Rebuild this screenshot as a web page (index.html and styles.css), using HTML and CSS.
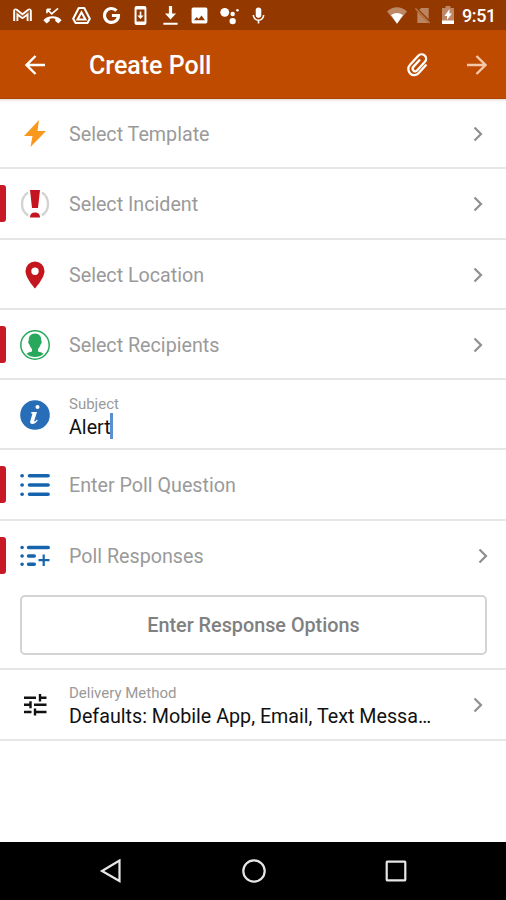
FILE: index.html
```html
<!DOCTYPE html>
<html lang="en">
<head>
    <meta charset="UTF-8">
    <meta name="viewport" content="width=device-width, initial-scale=1.0">
    <title>Create Poll</title>
    <link rel="stylesheet" href="styles.css">
</head>
<body>
    <div class="screen">
        <div class="status-bar">
            <div class="notifications">
                <svg viewBox="0 0 24 24"><path d="M3.500 19V6.500L12 13l8.500-6.500V19" fill="none" stroke="#fff" stroke-width="6.500" stroke-linejoin="round"/><path d="M3.500 20V6.500L12 13l8.500-6.500V20" fill="none" stroke="#a85a2c" stroke-width="2"/></svg>
                <svg viewBox="0 0 24 24"><path d="M5 4v5M5 4h5M5 4l6 6 8-7" fill="none" stroke="#fff" stroke-width="2"/><path d="M12 13C7 13 3 15 .5 18l4 4 4-3v-3q3.500-1 7 0v3l4 3 4-4C21 15 17 13 12 13z"/></svg>
                <svg viewBox="0 0 24 24"><path d="M8.500 2.500h7L22.500 16l-3 5.500h-15L1.500 16z" fill="none" stroke="#fff" stroke-width="2.600" stroke-linejoin="round"/><path d="M12 8l5 9H7z" fill="none" stroke="#fff" stroke-width="2.600"/></svg>
                <svg viewBox="0 0 24 24"><path d="M18.300 5.800A8.800 8.800 0 1 0 20.800 12H12.500" fill="none" stroke="#fff" stroke-width="4"/></svg>
                <svg viewBox="0 0 24 24"><path d="M7 0h10a2.500 2.500 0 0 1 2.500 2.500v19A2.500 2.500 0 0 1 17 24H7a2.500 2.500 0 0 1-2.500-2.500v-19A2.500 2.500 0 0 1 7 0zM7 4.500v15h10v-15zM11 7h2v5h3l-4 4.500L8 12h3z" fill-rule="evenodd"/></svg>
                <svg viewBox="0 0 24 24"><path d="M10 0h4v9.500h5L12 17 5 9.500h5zM3 21h18v2.600H3z"/></svg>
                <svg viewBox="0 0 24 24"><path d="M4 2h16a2 2 0 0 1 2 2v16a2 2 0 0 1-2 2H4a2 2 0 0 1-2-2V4a2 2 0 0 1 2-2zm1 16h14l-4.500-6-3.500 4.500L8.500 14z" fill-rule="evenodd"/></svg>
                <svg viewBox="0 0 24 24"><circle cx="6" cy="8" r="5.600"/><circle cx="16" cy="10" r="2.800"/><circle cx="22" cy="5.500" r="1.600"/><circle cx="16" cy="19" r="4"/></svg>
                <svg viewBox="0 0 24 24"><rect x="8.500" y="2" width="7" height="13" rx="3.500"/><path d="M5.500 11.500a6.500 6.500 0 0 0 13 0M12 18v4" fill="none" stroke="#fff" stroke-width="2"/></svg>
            </div>
            <div class="system">
                <svg class="wifi" viewBox="0 0 22 18"><path d="M0 4.500Q11-4.500 22 4.500L11 18z" opacity=".4"/><path d="M4.500 8.500Q11 4 17.500 8.500L11 18z"/></svg>
                <svg class="no-sim" viewBox="0 0 16 18"><path d="M6 1h8v16H2V5z" opacity=".38"/><path d="M0 1l16 16" stroke="#933900" stroke-width="3"/><path d="M0 1.500l15 15.500" stroke="#b87d55" stroke-width="1.500"/></svg>
                <svg class="battery" viewBox="0 0 12 18"><path d="M3.500 0h5v2H12v16H0V2h3.500z" opacity=".4"/><path d="M0 14.500h12V18H0zM7.500 3L2.500 10H5v4l5-6.500H7.500z"/></svg>
                <span class="clock">9:51</span>
            </div>
        </div>

        <div class="app-bar">
            <svg class="back" viewBox="0 0 20 20"><path d="M20 10H2M10.500 1L1.500 10l9 9"/></svg>
            <h1>Create Poll</h1>
            <svg class="clip" viewBox="0 0 24 24"><g transform="rotate(42 12 12)"><path d="M18 6v11.500a6 6 0 0 1-12 0V5a4.500 4.500 0 0 1 9 0v11.500a2.600 2.600 0 0 1-5.200 0V6.500"/></g></svg>
            <svg class="next" viewBox="0 0 20 20"><path d="M0 10h18M9.500 1l9 9-9 9"/></svg>
        </div>

        <div class="form">
            <div class="row">
                <div class="icon"><svg viewBox="0 0 30 30"><path d="M19 1L4 17h8.500L10.500 28 26 12h-8.500z" fill="#f9981d"/></svg></div>
                <div class="text placeholder">Select Template</div>
                <svg class="chevron" viewBox="0 0 10 16"><path d="M1.500 1.500L8 8l-6.500 6.500"/></svg>
            </div>
            <div class="row required">
                <div class="icon"><svg viewBox="0 0 30 30"><path d="M8 3.500a14 14 0 0 0 0 23M22 3.500a14 14 0 0 1 0 23" fill="none" stroke="#d3d3d3" stroke-width="2.400"/><path d="M10 1h10l-2 18h-6zM10 28.500q0-5 5-5t5 5z" fill="#c4141f"/></svg></div>
                <div class="text placeholder">Select Incident</div>
                <svg class="chevron" viewBox="0 0 10 16"><path d="M1.500 1.500L8 8l-6.500 6.500"/></svg>
            </div>
            <div class="row">
                <div class="icon"><svg viewBox="0 0 30 30"><path d="M15 1.500a9.500 9.500 0 0 0-9.500 9.500C5.500 18 15 28.500 15 28.500S24.500 18 24.500 11A9.500 9.500 0 0 0 15 1.500zm0 6a3.700 3.700 0 1 1 0 7.400 3.700 3.700 0 0 1 0-7.400z" fill="#c4161f" fill-rule="evenodd"/></svg></div>
                <div class="text placeholder">Select Location</div>
                <svg class="chevron" viewBox="0 0 10 16"><path d="M1.500 1.500L8 8l-6.500 6.500"/></svg>
            </div>
            <div class="row required">
                <div class="icon"><svg viewBox="0 0 30 30"><circle cx="15" cy="15" r="14.200" fill="none" stroke="#27a85d" stroke-width="1.500"/><path d="M15 3.500c-4.300 0-6.500 3-6.200 7-1 .3-.5 3.500.7 4 .5 2 1.300 3.300 2.500 4.500v2.500c-2 .8-4 .7-5.500 2.300Q10 27 15 27t8.500-3.200c-1.500-1.600-3.500-1.500-5.500-2.300V19c1.200-1.200 2-2.500 2.500-4.500 1.200-.5 1.700-3.700.7-4 .3-4-1.900-7-6.200-7z" fill="#27a85d"/></svg></div>
                <div class="text placeholder">Select Recipients</div>
                <svg class="chevron" viewBox="0 0 10 16"><path d="M1.500 1.500L8 8l-6.500 6.500"/></svg>
            </div>
            <div class="row subject">
                <div class="icon"><svg viewBox="0 0 30 30"><circle cx="15" cy="15" r="14.800" fill="#276db8"/><circle cx="17.500" cy="7" r="2" fill="#fff"/><path d="M11.500 12h5.500l-3 9.500q1.500 0 3-2l.8.800q-2.300 3.700-5.300 3.700-3 0-2.200-3l2.200-7.500h-1.500z" fill="#fff"/></svg></div>
                <div class="text filled">
                    <span class="label">Subject</span>
                    <span class="value">Alert<i class="caret"></i></span>
                </div>
            </div>
            <div class="row required">
                <div class="icon"><svg viewBox="0 0 30 30"><path d="M9.500 5.700h18.600M9.500 15h18.600M9.500 24.200h18.600M2 5.700h.2M2 15h.2M2 24.200h.2" stroke="#1764ae" stroke-width="3.600" stroke-linecap="round"/></svg></div>
                <div class="text placeholder">Enter Poll Question</div>
            </div>
            <div class="row required responses">
                <div class="icon"><svg viewBox="0 0 30 30"><path d="M8.500 6.500h19.800M8.500 15h5.800M8.500 23.300h5.800M2 6.500h.2M2 15h.2M2 23.300h.2" stroke="#1764ae" stroke-width="3.400" stroke-linecap="round"/><path d="M23.700 13.500v11.500M18.500 19.200h11" stroke="#1764ae" stroke-width="2.200"/></svg></div>
                <div class="text placeholder">Poll Responses</div>
                <svg class="chevron" viewBox="0 0 10 16"><path d="M1.500 1.500L8 8l-6.500 6.500"/></svg>
            </div>
            <div class="options">
                <button type="button">Enter Response Options</button>
            </div>
            <div class="row delivery">
                <div class="icon"><svg viewBox="0 0 30 30"><path d="M4 7.700h12M19 7.700h7.500M20 4v7.500M4 14.800h7M10.500 11.300v7M14 14.800h12.500M4 22h7.500M15 18.500v7M15 22h11.500" fill="none" stroke="#111" stroke-width="2.400"/></svg></div>
                <div class="text filled">
                    <span class="label">Delivery Method</span>
                    <span class="value">Defaults: Mobile App, Email, Text Messa…</span>
                </div>
                <svg class="chevron" viewBox="0 0 10 16"><path d="M1.500 1.500L8 8l-6.500 6.500"/></svg>
            </div>
        </div>

        <div class="nav-bar">
            <svg viewBox="0 0 24 24"><path d="M20.500 1.500v20.500L3 12z"/></svg>
            <svg viewBox="0 0 24 24"><circle cx="12" cy="12" r="10.700"/></svg>
            <svg viewBox="0 0 24 24"><rect x="2.700" y="2.700" width="18.600" height="18.600" rx=".5"/></svg>
        </div>
    </div>
</body>
</html>
```

FILE: styles.css
```css
* {
    box-sizing: border-box;
}

body {
    margin: 0;
    font-family: Roboto, "Liberation Sans", sans-serif;
    background-color: #fff;
}

svg {
    display: block;
    flex: none;
}

.screen {
    display: flex;
    flex-direction: column;
    width: 506px;
    height: 900px;
}

/* status bar */
.status-bar {
    display: flex;
    justify-content: space-between;
    align-items: center;
    height: 30px;
    padding: 0 10px 0 8px;
    background-color: #933900;
}

.status-bar svg {
    fill: #fff;
}

.notifications {
    display: flex;
}

.notifications svg {
    width: 19px;
    height: 19px;
    margin: 0 5.250px;
}

.system {
    display: flex;
    align-items: center;
}

.wifi {
    width: 20px;
    height: 17px;
    margin-right: 8px;
}

.no-sim {
    width: 16px;
    height: 17px;
    margin-right: 11px;
}

.battery {
    width: 12px;
    height: 18px;
    margin-right: 8px;
}

.clock {
    width: 34px;
    font-size: 18px;
    letter-spacing: -0.400px;
    font-weight: 500;
    line-height: 20px;
    padding-top: 1px;
    color: #fff;
    white-space: nowrap;
}

/* title bar */
.app-bar {
    display: flex;
    align-items: center;
    height: 69px;
    padding: 1px 19px 0 25px;
    background-color: #bf4b00;
    border-bottom: 1px solid #b04300;
}

.app-bar svg {
    width: 20px;
    height: 20px;
    fill: none;
    stroke: #fff;
    stroke-width: 2.400;
}

.app-bar h1 {
    flex: 1;
    margin: 0 0 0 44px;
    padding-top: 2px;
    font-size: 25px;
    font-weight: 500;
    line-height: 30px;
    color: #fff;
}

.app-bar .clip {
    width: 24px;
    height: 24px;
    margin-right: 37px;
    stroke-width: 2.300;
}

.app-bar .next {
    stroke: #f5c8aa;
}

/* form rows */
.form {
    flex: 1;
    background: linear-gradient(#e6dcd6, #fff 3px);
}

.row {
    position: relative;
    display: flex;
    align-items: center;
    height: 70.250px;
    padding: 2px 23px 0 20px;
    border-bottom: 2px solid #e6e6e6;
}

.required::before {
    content: "";
    position: absolute;
    left: 0;
    top: 16px;
    width: 6px;
    height: 37px;
    border-radius: 0 3px 3px 0;
    background-color: #c81a26;
}

.icon {
    width: 30px;
    margin-right: 19px;
}

.icon svg {
    width: 30px;
    height: 30px;
}

.text {
    flex: 1;
    min-width: 0;
    font-size: 19.700px;
    line-height: 24px;
    white-space: nowrap;
}

.placeholder {
    padding-top: 2px;
    color: #9a9a9a;
}

.label {
    display: block;
    font-size: 15px;
    line-height: 20px;
    color: #999;
}

.value {
    display: flex;
    line-height: 27px;
    color: #111;
}

.subject .filled {
    padding-top: 4px;
}

.delivery .filled {
    padding-top: 2px;
}

.caret {
    width: 3px;
    height: 26px;
    margin: -1px 0 0 -1px;
    background-color: #5b8fd0;
}

.chevron {
    width: 10px;
    height: 16px;
    fill: none;
    stroke: #8f8f8f;
    stroke-width: 2.200;
}

.responses {
    border-bottom: none;
    padding-top: 0;
    padding-right: 18px;
}

.options {
    height: 79.500px;
    padding: 4.500px 19px 0 20px;
    border-bottom: 2px solid #e6e6e6;
}

.options button {
    display: block;
    width: 100%;
    height: 60px;
    border: 2px solid #d3d3d3;
    border-radius: 5px;
    background-color: #fff;
    font-family: inherit;
    font-size: 19.800px;
    font-weight: 500;
    color: #808080;
}

/* system navigation */
.nav-bar {
    display: flex;
    justify-content: space-between;
    align-items: center;
    height: 58px;
    padding: 0 98px 0 99px;
    background-color: #000;
}

.nav-bar svg {
    width: 24px;
    height: 24px;
    fill: none;
    stroke: #e6e6e6;
    stroke-width: 2.200;
}
```
